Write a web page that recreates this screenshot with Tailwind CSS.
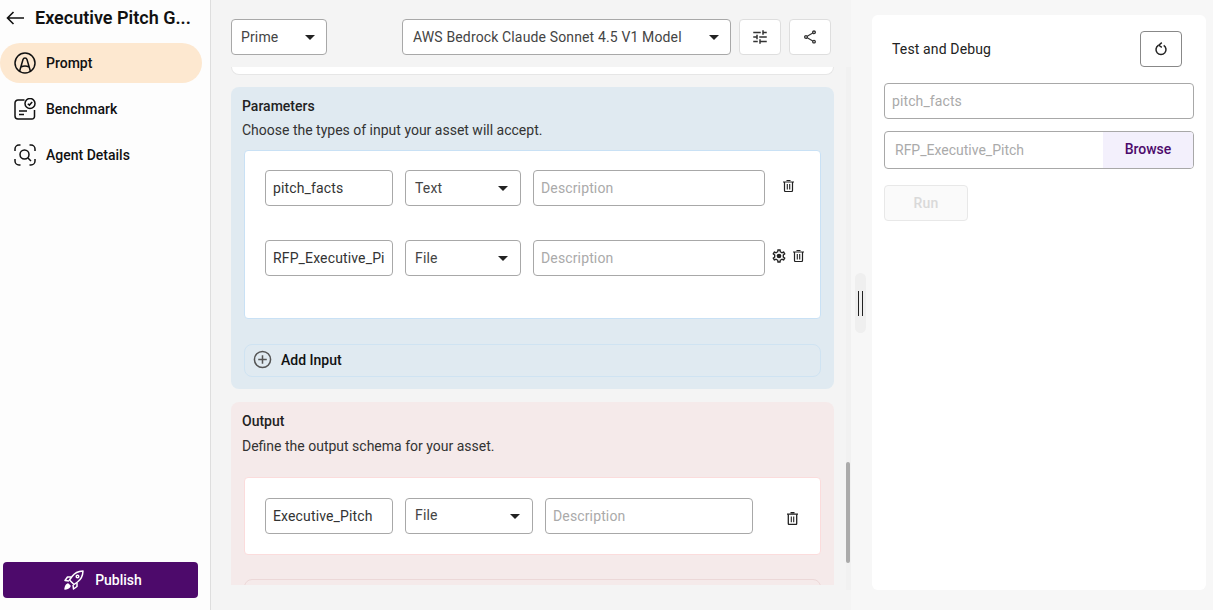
<!doctype html>
<html>
<head>
<meta charset="utf-8">
<script src="https://cdn.jsdelivr.net/npm/@tailwindcss/browser@4"></script>
</head>
<body class="m-0">
<div class="flex w-[1213px] h-[610px] overflow-hidden bg-[#f4f4f4] font-['Roboto',sans-serif] text-sm text-[#222]">

  <aside class="w-[211px] h-full shrink-0 bg-[#fdfdfd] border-r border-[#dedede] flex flex-col">
    <div class="h-[43px] flex items-center pl-[6px] pb-[7px] gap-[11px]">
      <svg class="w-[18px] h-[14px]" viewBox="0 0 18 14" fill="none" stroke="#111" stroke-width="1.6"><path d="M18 7H1.5M7.5 1 1.5 7l6 6"/></svg>
      <span class="text-lg font-semibold text-[#111] leading-6">Executive Pitch G...</span>
    </div>
    <nav class="flex flex-col gap-[6px] w-[202px] font-medium text-[#111]">
      <div class="h-10 rounded-full bg-[#fde8d0] flex items-center pl-[14px] gap-[10px]">
        <svg class="w-[22px] h-[22px]" viewBox="0 0 22 22" fill="none" stroke="#111" stroke-width="1.5"><circle cx="11" cy="11" r="10"/><path d="M5.500 19.500 9 7.500c.6-2 3.400-2 4 0l3.500 12M6.800 15c2.500-1.300 5.900-1.300 8.400 0"/></svg>
        <span>Prompt</span>
      </div>
      <div class="h-10 flex items-center pl-[14px] gap-[10px]">
        <svg class="w-[22px] h-[22px]" viewBox="0 0 22 22" fill="none" stroke="#111" stroke-width="1.5"><path d="M10.500 2H4a3 3 0 0 0-3 3v13a3 3 0 0 0 3 3h14a2.500 2.500 0 0 0 2.500-2.500V12"/><path d="M5 13h8M5 16.500h5"/><circle cx="16" cy="5.500" r="5"/><path d="m13.800 5.700 1.600 1.400 2.800-3.200"/></svg>
        <span>Benchmark</span>
      </div>
      <div class="h-10 flex items-center pl-[14px] gap-[10px]">
        <svg class="w-[22px] h-[22px]" viewBox="0 0 22 22" fill="none" stroke="#111" stroke-width="1.5"><path d="M1 7V5a4 4 0 0 1 4-4h1.500M15.500 1H17a4 4 0 0 1 4 4v2M21 15v2a4 4 0 0 1-4 4h-1.500M6.500 21H5a4 4 0 0 1-4-4v-2"/><circle cx="10.500" cy="10.500" r="4.500"/><path d="m14 14 3 3"/></svg>
        <span>Agent Details</span>
      </div>
    </nav>
    <div class="mt-auto mb-3 ml-[3px] w-[195px] h-9 rounded bg-[#4d0a6b] flex items-center justify-center gap-[11px] text-white font-medium pl-[5px]">
      <svg class="w-5 h-5" viewBox="0 0 20 20" fill="none" stroke="#fff" stroke-width="1.5" stroke-linejoin="round"><path d="M19 1c-5 .2-8.500 2-11 5.500L5.500 10 10 14.500l3.500-2.500C17 9.500 18.800 6 19 1Z"/><path d="M7 7H3.500L1 10.500l4 .5M13 13v3.500L9.500 19 9 15"/><circle cx="13.500" cy="6.500" r="1.300"/><path d="M4 14c-1.500.5-2.500 2-3 5 3-.5 4.500-1.500 5-3Z" fill="#fff"/></svg>
      <span>Publish</span>
    </div>
  </aside>

  <div class="w-[640px] h-full shrink-0 flex">
    <div class="w-[635px] shrink-0 pl-5 flex flex-col">
      <div class="pt-[19px] h-[67px] shrink-0 flex items-start tracking-[0.14px]">
        <div class="w-24 h-9 bg-white border border-[#a8a8a8] rounded flex items-center pl-[9px] pr-[11px] justify-between text-[#444]">
          <span>Prime</span>
          <svg class="w-[10px] h-[5px]" viewBox="0 0 10 5"><path d="M0 0h10L5 5Z" fill="#222"/></svg>
        </div>
        <div class="ml-[75px] w-[329px] h-9 bg-white border border-[#a8a8a8] rounded flex items-center pl-[10px] pr-[11px] justify-between text-[#444]">
          <span>AWS Bedrock Claude Sonnet 4.5 V1 Model</span>
          <svg class="w-[10px] h-[5px]" viewBox="0 0 10 5"><path d="M0 0h10L5 5Z" fill="#222"/></svg>
        </div>
        <div class="ml-2 w-[42px] h-9 bg-white border border-[#dedede] rounded flex items-center justify-center">
          <svg class="w-[18px] h-[18px]" viewBox="0 0 24 24" fill="#333"><path d="M3 17v2h6v-2H3zM3 5v2h10V5H3zm10 16v-2h8v-2h-8v-2h-2v6h2zM7 9v2H3v2h4v2h2V9H7zm14 4v-2H11v2h10zm-6-4h2V7h4V5h-4V3h-2v6z"/></svg>
        </div>
        <div class="ml-2 w-[42px] h-9 bg-white border border-[#dedede] rounded flex items-center justify-center">
          <svg class="w-[16px] h-[16px]" viewBox="0 0 24 24" fill="#333"><path d="M18 16.080c-.76 0-1.440.3-1.960.77L8.910 12.700c.05-.23.090-.46.090-.7s-.04-.47-.09-.7l7.050-4.110c.54.500 1.250.81 2.040.81 1.660 0 3-1.340 3-3s-1.340-3-3-3-3 1.340-3 3c0 .24.040.47.090.7L8.040 9.810C7.500 9.310 6.790 9 6 9c-1.660 0-3 1.340-3 3s1.340 3 3 3c.79 0 1.500-.31 2.040-.81l7.120 4.160c-.05.21-.08.43-.08.65 0 1.610 1.310 2.920 2.920 2.920s2.920-1.310 2.920-2.920-1.310-2.920-2.920-2.920zM18 4c.55 0 1 .45 1 1s-.45 1-1 1-1-.45-1-1 .45-1 1-1zM6 13c-.55 0-1-.45-1-1s.45-1 1-1 1 .45 1 1-.45 1-1 1zm12 7.020c-.55 0-1-.45-1-1s.45-1 1-1 1 .45 1 1-.45 1-1 1z"/></svg>
        </div>
      </div>

      <div class="w-[603px] h-[518px] shrink-0 overflow-hidden">
        <div class="h-2 bg-white rounded-b-lg border border-t-0 border-[#e6e6e6]"></div>

        <section class="mt-3 h-[302px] bg-[#e0eaf1] rounded-lg pt-[9px] px-[13px]">
          <div class="-mx-[2px] font-medium leading-5 text-[#222]">Parameters</div>
          <div class="-mx-[2px] mt-1 leading-5 text-[#333]">Choose the types of input your asset will accept.</div>
          <div class="mt-[10px] h-[169px] bg-white rounded border border-[#c9e1f5] pt-[19px] pl-5 tracking-[0.14px]">
            <div class="flex gap-3 items-start">
              <input class="w-32 h-9 pl-[7px] pr-2 bg-white border border-[#a8a8a8] rounded text-[#333] outline-none" value="pitch_facts">
              <div class="w-[116px] h-9 border border-[#a8a8a8] rounded flex items-center pl-[9px] pr-3 justify-between text-[#444]">
                <span>Text</span>
                <svg class="w-[10px] h-[5px]" viewBox="0 0 10 5"><path d="M0 0h10L5 5Z" fill="#222"/></svg>
              </div>
              <input class="w-[232px] h-9 px-[7px] border border-[#a8a8a8] rounded outline-none placeholder:text-[#aaa]" placeholder="Description">
              <svg class="ml-[6px] mt-[10px] w-[11px] h-3" viewBox="0 0 11 12" fill="none" stroke="#222"><path d="M3.500.5h4M0 2h11" stroke-width="1.200"/><path d="M1.500 2v8.500a1 1 0 0 0 1 1h6a1 1 0 0 0 1-1V2" stroke-width="1.200"/><path d="M4.300 4v5.500M6.700 4v5.500" stroke-width="1.100"/></svg>
            </div>
            <div class="flex gap-3 items-start mt-[34px]">
              <input class="w-32 h-9 pl-[7px] pr-2 bg-white border border-[#a8a8a8] rounded text-[#333] outline-none" value="RFP_Executive_Pitch">
              <div class="w-[116px] h-9 border border-[#a8a8a8] rounded flex items-center pl-[9px] pr-3 justify-between text-[#444]">
                <span>File</span>
                <svg class="w-[10px] h-[5px]" viewBox="0 0 10 5"><path d="M0 0h10L5 5Z" fill="#222"/></svg>
              </div>
              <input class="w-[232px] h-9 px-[7px] border border-[#a8a8a8] rounded outline-none placeholder:text-[#aaa]" placeholder="Description">
              <div class="-ml-[6px] mt-[8px] h-4 flex gap-[6px] items-center">
                <svg class="w-4 h-4" viewBox="0 0 24 24" fill="#222"><path d="M19.430 12.980c.04-.32.070-.64.070-.98 0-.34-.03-.66-.07-.98l2.110-1.650c.19-.15.24-.42.120-.64l-2-3.460c-.09-.16-.26-.25-.44-.25-.06 0-.12.010-.17.030l-2.490 1c-.52-.4-1.080-.73-1.690-.98l-.38-2.650C14.460 2.180 14.250 2 14 2h-4c-.25 0-.46.180-.49.420l-.38 2.650c-.61.25-1.170.59-1.690.98l-2.490-1c-.06-.02-.12-.03-.18-.03-.17 0-.34.090-.43.25l-2 3.460c-.13.22-.07.49.120.64l2.110 1.650c-.04.32-.07.65-.07.98 0 .33.030.66.070.98l-2.110 1.650c-.19.15-.24.42-.12.64l2 3.460c.09.16.26.25.44.25.06 0 .12-.01.17-.03l2.490-1c.52.4 1.080.73 1.690.98l.38 2.650c.03.24.24.42.49.42h4c.25 0 .46-.18.49-.42l.38-2.650c.61-.25 1.170-.59 1.690-.98l2.490 1c.06.020.12.030.18.030.17 0 .34-.09.43-.25l2-3.460c.12-.22.070-.49-.12-.64l-2.110-1.650zm-1.980-1.710c.04.31.050.52.050.73 0 .21-.02.43-.05.73l-.14 1.130.89.7 1.080.84-.7 1.210-1.270-.51-1.040-.42-.9.68c-.43.32-.84.56-1.250.73l-1.060.43-.16 1.130-.2 1.350h-1.400l-.19-1.350-.16-1.130-1.060-.43c-.43-.18-.83-.41-1.230-.71l-.91-.7-1.060.43-1.270.51-.7-1.210 1.080-.84.89-.7-.14-1.130c-.03-.31-.05-.54-.05-.74s.020-.43.050-.73l.14-1.130-.89-.7-1.080-.84.7-1.210 1.270.51 1.040.42.9-.68c.43-.32.84-.56 1.250-.73l1.060-.43.16-1.130.2-1.350h1.390l.19 1.350.16 1.130 1.060.43c.43.18.83.41 1.230.71l.91.7 1.060-.43 1.270-.51.7 1.210-1.070.85-.89.7.14 1.130z"/><circle cx="12" cy="12" r="3.500"/></svg>
                <svg class="w-[11px] h-3" viewBox="0 0 11 12" fill="none" stroke="#222"><path d="M3.500.5h4M0 2h11" stroke-width="1.200"/><path d="M1.500 2v8.500a1 1 0 0 0 1 1h6a1 1 0 0 0 1-1V2" stroke-width="1.200"/><path d="M4.300 4v5.500M6.700 4v5.500" stroke-width="1.100"/></svg>
              </div>
            </div>
          </div>
          <div class="mt-[25px] h-[33px] rounded-lg border border-[#cfe3f2] flex items-center pl-[8px] pb-[2px] gap-[9px] font-medium text-[#111]">
            <svg class="w-[19px] h-[19px]" viewBox="0 0 20 20" fill="none" stroke="#555" stroke-width="1.600"><circle cx="10" cy="10" r="8.500"/><path d="M10 5.500v9M5.500 10h9"/></svg>
            <span>Add Input</span>
          </div>
        </section>

        <section class="mt-[13px] h-[300px] bg-[#f5eaea] rounded-lg pt-[9px] px-[13px]">
          <div class="-mx-[2px] font-medium leading-5 text-[#222]">Output</div>
          <div class="-mx-[2px] mt-[5px] leading-5 text-[#333]">Define the output schema for your asset.</div>
          <div class="mt-[21px] h-[78px] bg-white rounded border border-[#fbdcdc] pt-5 pl-5 tracking-[0.14px]">
            <div class="flex gap-3 items-start">
              <input class="w-32 h-9 pl-[7px] pr-2 bg-white border border-[#a8a8a8] rounded text-[#333] outline-none" value="Executive_Pitch">
              <div class="w-32 h-9 border border-[#a8a8a8] rounded flex items-center pl-[9px] pr-3 justify-between text-[#444]">
                <span class="-mt-[2px]">File</span>
                <svg class="w-[10px] h-[5px]" viewBox="0 0 10 5"><path d="M0 0h10L5 5Z" fill="#222"/></svg>
              </div>
              <input class="w-52 h-9 px-[7px] border border-[#a8a8a8] rounded outline-none placeholder:text-[#aaa]" placeholder="Description">
              <svg class="ml-[22px] mt-[14px] w-[11px] h-[13px]" viewBox="0 0 11 13" fill="none" stroke="#222"><path d="M3.500.6h4M0 2.200h11" stroke-width="1.200"/><path d="M1.300 2.200v9.300a1 1 0 0 0 1 1h6.400a1 1 0 0 0 1-1V2.200" stroke-width="1.300"/><path d="M4.300 4.500v5.800M6.700 4.500v5.800" stroke-width="1.100"/></svg>
            </div>
          </div>
          <div class="mt-6 h-[40px] rounded-lg border border-[#ecd8d8]"></div>
        </section>
      </div>
    </div>
    <div class="w-[5px] mt-[67px] h-[523px] bg-[#f1f1f1] pt-[395px]">
      <div class="w-1 h-[101px] bg-[#ababab] rounded-sm"></div>
    </div>
  </div>

  <div class="flex-1 h-full pl-[21px] bg-[#f7f7f7] pr-[7px] pt-[15px] pb-5 flex relative">
    <div class="absolute left-1 top-[273px] w-[11px] h-[60px] rounded-md bg-[#efefef] flex justify-center pt-[18px]">
      <div class="w-[5px] h-[25px] border-x border-[#222]"></div>
    </div>
    <div class="w-[334px] h-full bg-white rounded-md pt-4 px-3">
      <div class="h-9 flex items-center justify-between pl-2 pr-3">
        <span class="text-[#222] tracking-[0.14px]">Test and Debug</span>
        <div class="w-[42px] h-9 border border-[#888] rounded flex items-center justify-center">
          <svg class="w-[14px] h-[14px]" viewBox="0 0 14 14" fill="none" stroke="#222" stroke-width="1.500"><path d="M4.300 3.400a5 5 0 1 0 5.400 0"/><path d="M7.800 .6 4.800 3.200l3 2.200" stroke-width="1.400"/></svg>
        </div>
      </div>
      <input class="mt-4 w-[310px] h-9 px-[7px] border border-[#a8a8a8] rounded outline-none placeholder:text-[#aaa] block tracking-[0.1px]" placeholder="pitch_facts">
      <div class="mt-3 w-[310px] h-[38px] border border-[#a8a8a8] rounded flex items-center overflow-hidden">
        <span class="flex-1 pl-[10px] text-[#aaa]">RFP_Executive_Pitch</span>
        <span class="w-[90px] h-full bg-[#f3f0fc] flex items-center justify-center font-medium text-[#4d0a6b] pb-[2px]">Browse</span>
      </div>
      <div class="mt-4 w-[84px] h-9 bg-[#fafafa] border border-[#e8e8e8] rounded flex items-center justify-center font-medium text-[#d9d9d9] tracking-[0.14px]">Run</div>
    </div>
  </div>
</div>
</body>
</html>
